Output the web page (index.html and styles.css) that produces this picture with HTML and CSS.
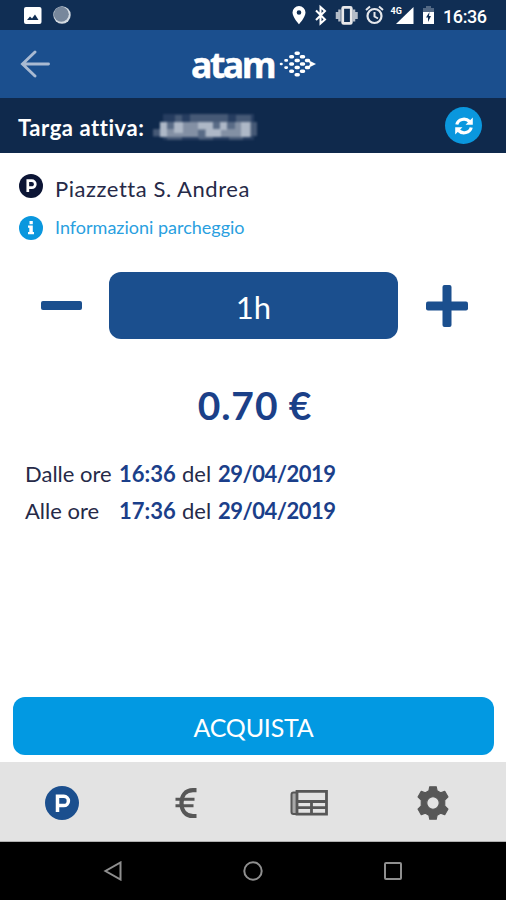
FILE: index.html
```html
<!DOCTYPE html>
<html lang="it">
<head>
<meta charset="utf-8">
<title>atam</title>
<link rel="stylesheet" href="styles.css">
</head>
<body>
<div class="status">
  <svg width="506" height="30" viewBox="0 0 506 30">
    <rect x="24" y="7" width="17.500" height="17" rx="2" fill="#fff"/>
    <path d="M27 20l3-3.500 2 2 3-4 3.500 5.500z" fill="#102e54"/>
    <circle cx="62" cy="15" r="8.700" fill="#d4dbe2"/><circle cx="61.300" cy="14.300" r="7.500" fill="#77879c"/>
    <path d="M299 6a6.500 6.500 0 0 0-6.500 6.500c0 4.700 6.500 11.800 6.500 11.800s6.500-7.100 6.500-11.800A6.500 6.500 0 0 0 299 6zm0 4.200a2.300 2.300 0 1 1 0 4.600 2.300 2.300 0 0 1 0-4.600z" fill="#fff" fill-rule="evenodd"/>
    <path d="M316 10.500l9 9-4.500 4V7l4.500 4-9 9" fill="none" stroke="#fff" stroke-width="2"/>
    <path d="M337 12v7M339.500 9.500v12M354 9.500v12M356.500 12v7" stroke="#b4bdc9" stroke-width="2.500"/>
    <rect x="342.700" y="7.400" width="8.600" height="16" rx="1" fill="none" stroke="#e8e8ea" stroke-width="2.800"/>
    <circle cx="374.500" cy="16" r="7" fill="none" stroke="#e6e8ec" stroke-width="2.200"/>
    <path d="M374.500 12v4.500l3.500 2M366 10l4-3.500M383 10l-4-3.500" fill="none" stroke="#e6e8ec" stroke-width="2"/>
    <path d="M413.500 7v17H396z" fill="#fff"/>
    <path d="M426 6h5v2h3v7h-11V8h3z" fill="#536985"/>
    <path d="M423 12h11v12h-11z" fill="#fff"/><path d="M429.500 12l-3.500 5.500h2V22l3-6h-2z" fill="#102e54"/>
    <text class="net" x="390.500" y="14">4G</text>
    <text class="clock" x="443" y="22.500" textLength="44">16:36</text>
  </svg>
</div>
<header class="header">
  <svg class="back" width="30" height="28" viewBox="0 0 30 28"><path d="M28.500 14H3M15 2L2.500 14 15 26" fill="none" stroke="#a9bad2" stroke-width="2.900" stroke-linecap="round"/></svg>
  <div class="logo">
    <span class="logo-text">atam</span>
    <svg width="38" height="28" viewBox="0 0 38 28" fill="none" stroke="#fff" stroke-width="3.500" stroke-linecap="round">
      <path stroke-width="2.600" d="M2 14h.5M6.500 10.400h1.300M6.500 17.600h1.300"/>
      <path d="M11.800 6.800h1.600M11.800 14h1.600M11.800 21.200h1.600M17.200 3.200h2M17.200 10.400h2M17.200 17.600h2M17.200 24.800h2M22.500 6.800h2M22.500 14h2M22.500 21.200h2M27.500 10.400h2M27.500 17.600h2"/>
      <path d="M29 10l8 4-8 4 2-4z" fill="#fff" stroke="none"/>
    </svg>
  </div>
</header>
<section class="plate">
  <span class="plate-label">Targa attiva:</span>
  <svg class="mask" width="112" height="32" viewBox="0 0 112 32">
    <path fill="#263d60" d="M14 3h91v26H14zM4 18h10v8H4z"/>
    <path fill="#465976" d="M4 18h7v7H4zM26 4h7v7h-7zM41 3h38v8H41zM87 4h15v7H87zM102 11h6v14h-6zM18 26h15v3H18zM50 26h14v3H50zM80 26h14v3H80z"/>
    <path fill="#8390a4" d="M11 11h91v15H11z"/>
    <path fill="#aeb8c7" d="M11 11h7v15h-7zM25 11h9v11h-9zM49 11h15v7H49zM57 18h15v8H57zM71 11h7v8h-7zM92 11h9v15h-9z"/>
    <path fill="#596b86" d="M18 11h7v7h-7zM49 19h7v8h-7zM64 11h7v7h-7zM78 11h8v7h-8z"/>
  </svg>
  <button class="refresh" aria-label="Aggiorna"><svg width="20" height="20" viewBox="0 0 20 20"><path d="M2.800 8.500C4 3 11.500 1.500 15.500 5.500M17.200 11.500C16 17 8.500 18.500 4.500 14.500" fill="none" stroke="#fff" stroke-width="3.200"/><path d="M18.800 1.500v7.300h-7.300zM1.200 18.500v-7.300h7.300z" fill="#fff"/></svg></button>
</section>
<main class="content">
  <div class="place"><svg width="24" height="24" viewBox="0 0 24 24"><circle cx="12" cy="12" r="12" fill="#0c1535"/><path d="M8.800 18V6.700h4a3.200 3.200 0 0 1 0 7H9" fill="none" stroke="#fff" stroke-width="2.700"/></svg><span>Piazzetta S. Andrea</span></div>
  <div class="info"><svg width="24" height="24" viewBox="0 0 24 24"><circle cx="12" cy="12" r="12" fill="#0a97de"/><path d="M10.500 5h3.300v3.200h-3.300zM9 9.600h4.800v6.400H15V18.200H9V16h1.300v-4.200H9z" fill="#fff"/></svg><span>Informazioni parcheggio</span></div>
  <div class="stepper">
    <i class="minus"></i><div class="duration"><span>1h</span></div>
    <svg class="plus" width="42" height="42" viewBox="0 0 42 42" fill="#1b4f8e"><rect y="16.500" width="42" height="9" rx="2"/><rect x="16.500" width="9" height="42" rx="2"/></svg>
  </div>
  <div class="price"><span>0.70 €</span></div>
  <div class="times">
    <span>Dalle ore</span><b>16:36</b><span>del</span><b class="date">29/04/2019</b>
    <span>Alle ore</span><b>17:36</b><span>del</span><b class="date">29/04/2019</b>
  </div>
  <button class="buy"><span>ACQUISTA</span></button>
</main>
<nav class="tabs">
  <svg width="34" height="34" viewBox="0 0 34 34"><circle cx="17" cy="17" r="17" fill="#1b4f8e"/><path d="M12.500 26V10.300h6.300a4.500 4.500 0 0 1 0 9.200H13" fill="none" stroke="#fff" stroke-width="3.500"/></svg>
  <svg width="24" height="32" viewBox="0 0 24 32"><path d="M22.500 3.200H19C11 3.200 7.500 9 7.500 16S11 29 19 29h3.500" fill="none" stroke="#575757" stroke-width="4.200"/><path d="M1.500 12.200h19M1.500 18.800h18" stroke="#575757" stroke-width="3"/></svg>
  <svg width="40" height="28" viewBox="0 0 40 28"><path d="M4.500 3.500H8V25H4.500Q2.500 25 2.500 23V5.500Q2.500 3.500 4.500 3.500z" fill="#a8a8a8" stroke="#575757" stroke-width="2"/><path d="M8 2.300H37.500V25.200H8zM8 12.500H37M8 18.700H37M22.500 13v12" fill="none" stroke="#575757" stroke-width="2.800"/></svg>
  <svg width="34" height="34" viewBox="0 0 24 24"><path fill="#575757" stroke="#575757" stroke-width=".8" stroke-linejoin="round" fill-rule="evenodd" d="M9.700.5h4.600l.6 2.900 2.500 1.400 2.900-1.100 2.300 4-2.300 2.200v4.200l2.300 2.200-2.300 4-2.900-1.100-2.500 1.400-.6 2.900H9.700l-.6-2.900-2.500-1.400-2.900 1.100-2.300-4 2.300-2.200V9.900L1.400 7.700l2.300-4 2.900 1.100 2.500-1.400zM12 7.600a4.400 4.400 0 1 0 0 8.800 4.400 4.400 0 0 0 0-8.800z"/></svg>
</nav>
<footer class="system">
  <svg width="20" height="20" viewBox="0 0 20 20"><path d="M17.500 1.500v17L2.500 10z"/></svg>
  <svg width="20" height="20" viewBox="0 0 20 20"><circle cx="10" cy="10" r="8.700"/></svg>
  <svg width="20" height="20" viewBox="0 0 20 20"><rect x="2" y="2" width="16" height="16" rx="1"/></svg>
</footer>
</body>
</html>
```
FILE: styles.css
```css
* { box-sizing: border-box; }
body { margin: 0; width: 506px; height: 900px; background: #fff; font-family: Lato, sans-serif; font-variant-ligatures: none; color: #262a48; display: flex; flex-direction: column; overflow: hidden; }
svg { display: block; flex: none; }
button { border: 0; padding: 0; font: inherit; color: #fff; }
span, b { white-space: nowrap; }
.status { height: 30px; background: #102e54; }
.net { font: bold 9px Roboto, sans-serif; fill: #fff; }
.clock { font: 500 18px Roboto, sans-serif; fill: #fff; }
.header { height: 68px; background: #1b4f8e; display: flex; align-items: center; padding-left: 20px; }
.logo { display: flex; align-items: center; margin-left: 141px; }
.logo-text { width: 88px; font: bold 35.500px/40px "Open Sans", sans-serif; letter-spacing: -2.500px; color: #fff; -webkit-text-stroke: .5px #fff; }
.plate { height: 55px; background: #0f294c; color: #fff; display: flex; align-items: center; padding: 0 24px 0 18px; }
.plate-label { width: 131px; padding-top: 3px; font-size: 22px; font-weight: 700; letter-spacing: .55px; }
.mask { filter: blur(.8px); margin-top: 2px; }
.refresh { width: 37px; height: 37px; border-radius: 50%; background: #0a97de; display: grid; place-items: center; margin-left: auto; }
.content { height: 609px; padding: 20px 12px 0 13px; display: flex; flex-direction: column; }
.place, .info { display: flex; align-items: center; gap: 12px; margin-left: 6px; }
.place { height: 26px; font-size: 22px; letter-spacing: .55px; }
.place span { padding-top: 4px; }
.info { height: 26px; margin-top: 16px; font-size: 18px; color: #2a9fe0; }
.info span { margin-top: -2px; }
.stepper { height: 67px; margin-top: 31px; display: flex; align-items: center; }
.minus { width: 41px; height: 9px; border-radius: 2px; background: #1b4f8e; margin-left: 28px; }
.duration { width: 289px; height: 67px; border-radius: 12px; background: #1b4f8e; color: #fff; margin: 0 28px 0 27px; display: grid; place-items: center; font-size: 31px; }
.duration span { padding-top: 3px; }
.price { height: 48px; margin-top: 42px; padding-left: 3px; text-align: center; font-size: 39px; line-height: 48px; font-weight: 700; letter-spacing: .9px; color: #1b4088; }
.times { margin: 26px 0 0 12px; display: grid; grid-template-columns: 94px 63px 36px auto; grid-auto-rows: 37px; align-items: center; font-size: 22px; }
.times b { color: #1b3f8a; }
.times .date { letter-spacing: -.5px; }
.buy { height: 58px; border-radius: 12px; background: #0299e2; margin-top: auto; margin-bottom: 7px; font-size: 25px; letter-spacing: -.2px; }
.buy span { position: relative; top: 1px; }
.tabs { height: 80px; background: #e3e3e3; border-bottom: 1px solid #b0b0b0; display: grid; grid-template-columns: repeat(4, 123.700px); justify-items: center; align-items: center; padding-top: 2px; }
.system { height: 58px; background: #000; display: flex; justify-content: center; align-items: center; gap: 120px; }
.system svg { fill: none; stroke: #8f8f8f; stroke-width: 2; }
```
